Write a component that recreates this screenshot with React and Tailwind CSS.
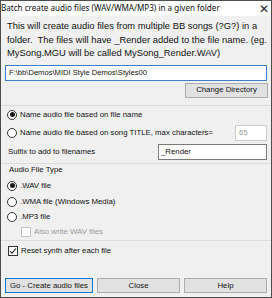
function Radio({checked}) {
  return (
    <span className="flex h-[10px] w-[10px] shrink-0 items-center justify-center rounded-full border border-[#333] bg-white">
      {checked && <span className="h-[5px] w-[5px] rounded-full bg-[#1a1a1a]" />}
    </span>
  );
}

function Check({checked, disabled}) {
  return (
    <span
      className={
        disabled
          ? 'flex h-[10px] w-[10px] shrink-0 items-center justify-center border border-[#c6c6c6] bg-white'
          : 'flex h-[10px] w-[10px] shrink-0 items-center justify-center border border-[#333] bg-white'
      }
    >
      {checked && (
        <svg width="8" height="8" viewBox="0 0 8 8">
          <path d="M1 4 L3 6.2 L7 1.5" fill="none" stroke="#222" strokeWidth="1.1" />
        </svg>
      )}
    </span>
  );
}

function Btn({children, primary}) {
  return (
    <div
      className={
        primary
          ? 'flex h-[15px] w-[88px] items-center justify-center border border-[#0078d7] bg-[#e1e1e1]'
          : 'flex h-[15px] w-[83px] items-center justify-center border border-[#adadad] bg-[#e1e1e1]'
      }
    >
      {children}
    </div>
  );
}

export default function App() {
  return (
    <div className="flex h-[298px] w-[272px] flex-col border border-[#4d4d4d] bg-[#f0f0f0] font-['Liberation_Sans',Arial,sans-serif] text-[7.8px] leading-none text-[#111]">
      <div className="flex h-[15px] shrink-0 items-center justify-between whitespace-nowrap bg-white pr-[2px] font-['Noto_Sans',sans-serif] text-[8.1px]">
        <span>Batch create audio files (WAV/WMA/MP3) in a given folder</span>
        <span className="text-[12px] font-light leading-none text-[#222]">✕</span>
      </div>

      <div className="mt-[3px] whitespace-nowrap pl-[6px] text-[9.4px] leading-[13.5px] text-[#111]">
        <div>This will create audio files from multiple BB songs (?G?) in a</div>
        <div>folder.&nbsp; The files will have _Render added to the file name. (eg.</div>
        <div>MySong.MGU will be called MySong_Render.WAV)</div>
      </div>

      <div className="mx-[4px] mt-[5px] flex h-[16px] items-center border border-[#3f7fc9] bg-white px-[3px] text-[7.6px]">
        F:\bb\Demos\MIDI Style Demos\Styles00
      </div>
      <div className="mt-[2px] flex justify-end pr-[3px]">
        <Btn>Change Directory</Btn>
      </div>

      <div className="mt-[7px] h-px bg-[#dadada]" />

      <div className="mt-[2px] flex h-[14px] items-center gap-[3px] pl-[6px]">
        <Radio checked />
        <span>Name audio file based on file name</span>
      </div>
      <div className="mt-[3px] flex h-[16px] items-center pl-[6px] pr-[4px]">
        <Radio />
        <span className="ml-[3px]">Name audio file based on song TITLE, max characters=</span>
        <div className="ml-auto flex h-[16px] w-[32px] items-center border border-[#cccccc] bg-white px-[3px] text-[#9a9a9a]">
          65
        </div>
      </div>
      <div className="mt-[3px] flex h-[16px] items-center pl-[7px] pr-[4px]">
        <span>Sulfix to add to filenames</span>
        <div className="ml-auto flex h-[16px] w-[109px] items-center border border-[#7a7a7a] bg-white px-[2px]">
          _Render
        </div>
      </div>

      <div className="mt-[3px] border-y border-[#dcdcdc] pb-[1px] pl-[6px]">
        <div className="pt-[1px] pl-[2px] leading-[10px]">Audio File Type</div>
        <div className="mt-[4px] flex h-[14px] items-center gap-[3px]">
          <Radio checked />
          <span>.WAV file</span>
        </div>
        <div className="mt-[2px] flex h-[14px] items-center gap-[3px]">
          <Radio />
          <span>.WMA file (Windows Media)</span>
        </div>
        <div className="mt-[1px] flex h-[14px] items-center gap-[3px]">
          <Radio />
          <span>.MP3 file</span>
        </div>
        <div className="mt-[1px] flex h-[14px] items-center gap-[3px] pl-[14px] text-[#9a9a9a]">
          <Check disabled />
          <span>Also write WAV files</span>
        </div>
      </div>

      <div className="mt-[3px] flex h-[14px] items-center gap-[3px] pl-[7px]">
        <Check checked />
        <span>Reset synth after each file</span>
      </div>

      <div className="mt-auto mb-[4px] flex justify-between px-[4px]">
        <Btn primary>Go - Create audio files</Btn>
        <Btn>Close</Btn>
        <Btn>Help</Btn>
      </div>
    </div>
  );
}
